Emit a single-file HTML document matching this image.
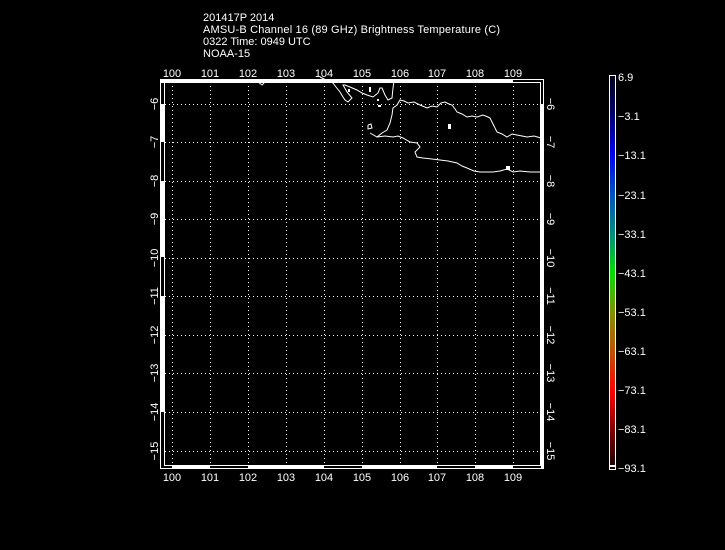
<!DOCTYPE html>
<html><head><meta charset="utf-8"><style>
html,body{margin:0;padding:0;background:#000;width:725px;height:550px;overflow:hidden}
svg{display:block}
text{font-family:"Liberation Sans","DejaVu Sans",sans-serif;font-size:11px;fill:#fff}
</style></head><body>
<svg width="725" height="550" viewBox="0 0 725 550" xmlns="http://www.w3.org/2000/svg">
<defs>
<linearGradient id="cb" x1="0" y1="0" x2="0" y2="1">
<stop offset="0" stop-color="#000018"/>
<stop offset="0.1" stop-color="#000070"/>
<stop offset="0.2" stop-color="#0000f0"/>
<stop offset="0.3" stop-color="#0050c0"/>
<stop offset="0.4" stop-color="#008a80"/>
<stop offset="0.5" stop-color="#00e000"/>
<stop offset="0.6" stop-color="#809000"/>
<stop offset="0.7" stop-color="#c05000"/>
<stop offset="0.8" stop-color="#ff0000"/>
<stop offset="0.9" stop-color="#800000"/>
<stop offset="1" stop-color="#100000"/>
</linearGradient>
</defs>
<text x="203" y="21">201417P 2014</text>
<text x="203" y="33" textLength="297">AMSU-B Channel 16 (89 GHz) Brightness Temperature (C)</text>
<text x="203" y="45">0322 Time: 0949 UTC</text>
<text x="203" y="57">NOAA-15</text>

<g stroke="#fff" stroke-width="1" stroke-dasharray="1,3">
<line x1="172.5" y1="82" x2="172.5" y2="466"/><line x1="210.5" y1="82" x2="210.5" y2="466"/>
<line x1="248.5" y1="82" x2="248.5" y2="466"/><line x1="286.5" y1="82" x2="286.5" y2="466"/>
<line x1="324.5" y1="82" x2="324.5" y2="466"/><line x1="362.5" y1="82" x2="362.5" y2="466"/>
<line x1="400.5" y1="82" x2="400.5" y2="466"/><line x1="437.5" y1="82" x2="437.5" y2="466"/>
<line x1="475.5" y1="82" x2="475.5" y2="466"/><line x1="513.5" y1="82" x2="513.5" y2="466"/>
<line x1="165" y1="104.5" x2="541" y2="104.5"/><line x1="165" y1="142.5" x2="541" y2="142.5"/>
<line x1="165" y1="181.5" x2="541" y2="181.5"/><line x1="165" y1="219.5" x2="541" y2="219.5"/>
<line x1="165" y1="258.5" x2="541" y2="258.5"/><line x1="165" y1="296.5" x2="541" y2="296.5"/>
<line x1="165" y1="335.5" x2="541" y2="335.5"/><line x1="165" y1="373.5" x2="541" y2="373.5"/>
<line x1="165" y1="412.5" x2="541" y2="412.5"/><line x1="165" y1="451.5" x2="541" y2="451.5"/>
</g>

<g fill="none" stroke="#fff" stroke-width="1">
<rect x="160.5" y="79.5" width="383" height="389"/>
<rect x="164.5" y="82.5" width="376" height="383"/>
</g>
<g fill="#fff">
<rect x="160" y="79" width="353" height="4"/>
<rect x="161" y="104" width="4" height="38"/>
<rect x="161" y="181" width="4" height="76"/>
<rect x="161" y="296" width="4" height="116"/>
<rect x="541" y="104" width="3" height="364"/>
<rect x="172" y="465" width="38" height="4"/>
<rect x="248" y="465" width="76" height="4"/>
<rect x="362" y="465" width="75" height="4"/>
<rect x="475" y="465" width="38" height="4"/>
</g>

<g fill="none" stroke="#fff" stroke-width="1">
<polyline points="320,77 326,80 333,83 336,87 340,92 343,97 345,100 348,102 352,98 347,92 343,85 345,85 350,87 357,90 362,93 367,95 373,97 378,93 380,88 382,88 385,95 388,100 392,98 393,88 394,81"/>
<polyline points="370,133 377,137 382,133 387,130 390,123 392,115 393,108 397,105 400,100 404,101 408,103 414,102 420,105 427,108 432,106 437,107 441,103 445,102 449,104 452,105 455,109 457,112 462,114 467,117 472,116 477,117 483,115 488,117 490,118 493,124 497,132 502,134 507,137 512,134 517,135 522,136 527,137 534,136 541,138"/>
<polyline points="377,137 385,136 393,137 398,136 403,138 410,142 417,143 420,147 415,152 417,157 423,158 432,159 440,160 448,161 457,163 462,166 467,168 474,171 480,172 487,172 493,172 500,171 507,169 513,172 520,171 530,172 535,172 541,172"/>
<polyline points="368,125 371,124 372,128 368,129 368,125"/>
<polyline points="258,82 262,85 265,82"/>
</g>
<g fill="#fff">
<rect x="348" y="89" width="2" height="3"/><rect x="369" y="87" width="2" height="5"/>
<rect x="377" y="99" width="2" height="2"/><rect x="378" y="105" width="3" height="2"/>
<rect x="448" y="124" width="3" height="5"/><rect x="506" y="166" width="4" height="4"/>
</g>

<g text-anchor="middle">
<text x="172" y="77">100</text><text x="210" y="77">101</text><text x="248" y="77">102</text><text x="286" y="77">103</text><text x="324" y="77">104</text><text x="362" y="77">105</text><text x="400" y="77">106</text><text x="437" y="77">107</text><text x="475" y="77">108</text><text x="513" y="77">109</text>
<text x="172" y="481">100</text><text x="210" y="481">101</text><text x="248" y="481">102</text><text x="286" y="481">103</text><text x="324" y="481">104</text><text x="362" y="481">105</text><text x="400" y="481">106</text><text x="437" y="481">107</text><text x="475" y="481">108</text><text x="513" y="481">109</text>
</g>
<g text-anchor="middle">
<text transform="translate(158,104) rotate(-90)">−6</text>
<text transform="translate(158,142) rotate(-90)">−7</text>
<text transform="translate(158,181) rotate(-90)">−8</text>
<text transform="translate(158,219) rotate(-90)">−9</text>
<text transform="translate(158,258) rotate(-90)">−10</text>
<text transform="translate(158,296) rotate(-90)">−11</text>
<text transform="translate(158,335) rotate(-90)">−12</text>
<text transform="translate(158,373) rotate(-90)">−13</text>
<text transform="translate(158,412) rotate(-90)">−14</text>
<text transform="translate(158,451) rotate(-90)">−15</text>
<text transform="translate(547,104) rotate(90)">−6</text>
<text transform="translate(547,142) rotate(90)">−7</text>
<text transform="translate(547,181) rotate(90)">−8</text>
<text transform="translate(547,219) rotate(90)">−9</text>
<text transform="translate(547,258) rotate(90)">−10</text>
<text transform="translate(547,296) rotate(90)">−11</text>
<text transform="translate(547,335) rotate(90)">−12</text>
<text transform="translate(547,373) rotate(90)">−13</text>
<text transform="translate(547,412) rotate(90)">−14</text>
<text transform="translate(547,451) rotate(90)">−15</text>
</g>

<rect x="609" y="75" width="7" height="395" fill="url(#cb)"/>
<rect x="609.5" y="75.5" width="6" height="394" fill="none" stroke="#fff"/>
<rect x="609" y="465" width="7" height="2" fill="#fff"/>
<g>
<text x="618" y="81">6.9</text><text x="618" y="120">−3.1</text><text x="618" y="159">−13.1</text><text x="618" y="199">−23.1</text><text x="618" y="238">−33.1</text><text x="618" y="277">−43.1</text><text x="618" y="316">−53.1</text><text x="618" y="355">−63.1</text><text x="618" y="394">−73.1</text><text x="618" y="433">−83.1</text><text x="618" y="472">−93.1</text>
</g>
</svg>
</body></html>
